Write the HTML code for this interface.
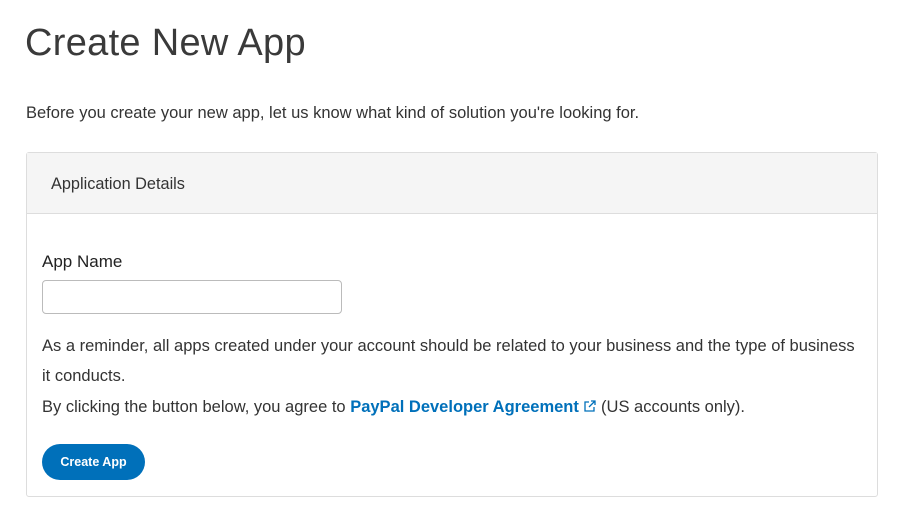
<!DOCTYPE html>
<html><head><meta charset="utf-8"><style>
body{margin:0;width:917px;height:531px;background:#fff;font-family:"Liberation Sans",sans-serif;color:#2c2e2f;position:relative;overflow:hidden}
.a{position:absolute;white-space:nowrap}
h1{position:absolute;left:25px;top:22px;margin:0;font-weight:300;font-size:38px;color:#3a3a3a;letter-spacing:0.3px}
.card{position:absolute;left:26px;top:152px;width:850px;height:343px;border:1px solid #ddd;border-radius:3px}
.hd{height:60px;background:#f5f5f5;border-bottom:1px solid #ddd}
.inp{position:absolute;left:42px;top:280px;width:298px;height:32px;border:1px solid #bbb;border-radius:4px}
.btn{position:absolute;left:42px;top:444px;width:103px;height:36px;border-radius:18px;background:#0070ba;color:#fff;font-weight:bold;font-size:12.5px;text-align:center;line-height:36px}
.t{font-size:16.5px;color:#333}
a{color:#0070ba;font-weight:bold;text-decoration:none}
</style></head><body>
<h1>Create New App</h1>
<div class="a t" style="left:26px;top:104px">Before you create your new app, let us know what kind of solution you're looking for.</div>
<div class="card"><div class="hd"></div></div>
<div class="a" style="left:51px;top:175px;font-size:16.3px;color:#333">Application Details</div>
<div class="a" style="left:42px;top:252px;font-size:17px;color:#222">App Name</div>
<div class="inp"></div>
<div class="a t" style="left:42px;top:337px">As a reminder, all apps created under your account should be related to your business and the type of business</div>
<div class="a t" style="left:42px;top:367px">it conducts.</div>
<div class="a t" style="left:42px;top:398px">By clicking the button below, you agree to <a>PayPal Developer Agreement</a> <svg width="13" height="13" viewBox="0 0 13 13" style="vertical-align:-1px"><path d="M6 2H2v9h9V7M8 1h4v4M12 1L6 7" fill="none" stroke="#0070ba" stroke-width="1.3"/></svg> (US accounts only).</div>
<div class="btn">Create App</div>
</body></html>
